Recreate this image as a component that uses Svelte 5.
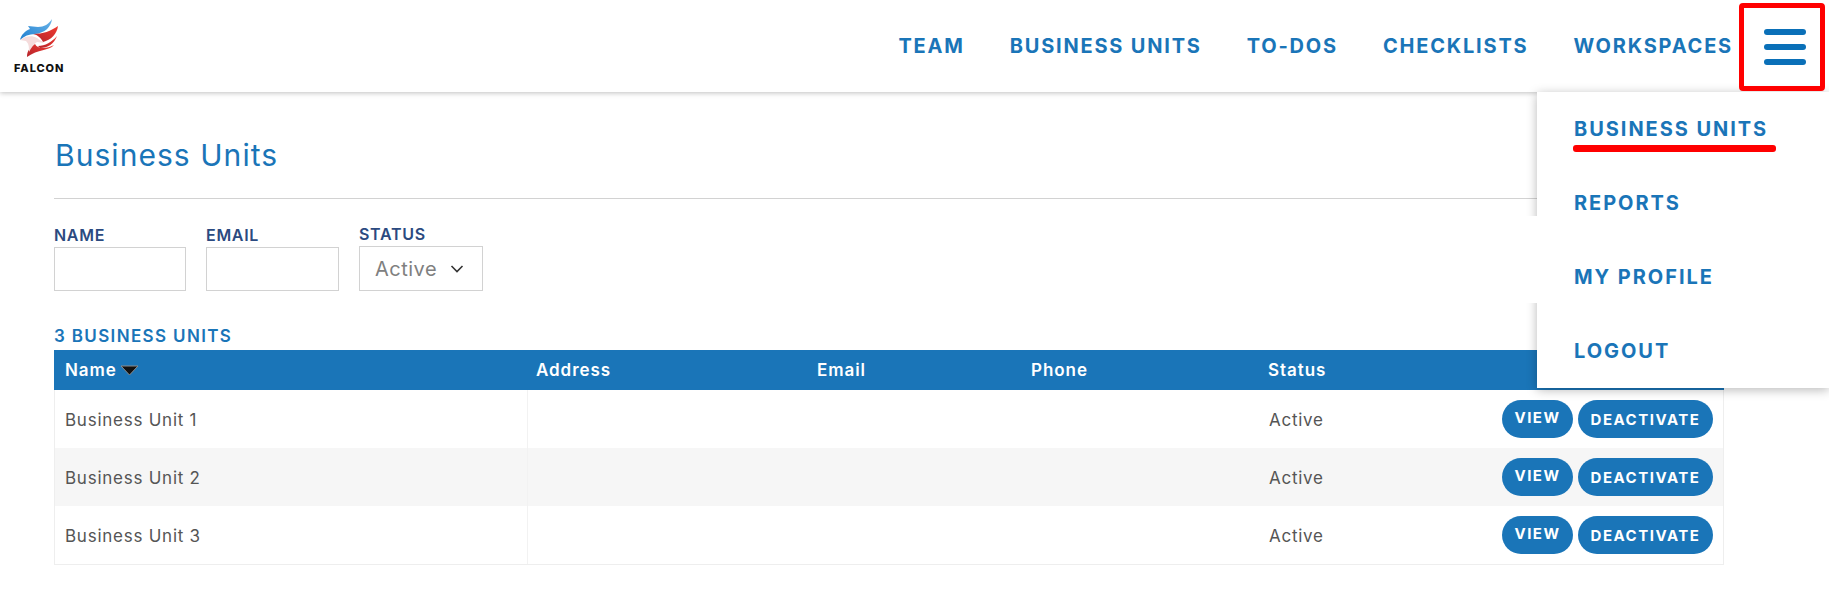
<script>
    let navItems = ['TEAM', 'BUSINESS UNITS', 'TO-DOS', 'CHECKLISTS', 'WORKSPACES'];
    let menuItems = ['BUSINESS UNITS', 'REPORTS', 'MY PROFILE', 'LOGOUT'];
    let units = ['Business Unit 1', 'Business Unit 2', 'Business Unit 3'];
</script>

<div class="page">
    <header class="topbar">
        <div class="logo">
            <svg width="66" height="40" viewBox="0 0 66 40">
                <defs>
                    <linearGradient id="blue" x1="0" y1="1" x2="1" y2="0">
                        <stop offset="0" stop-color="#1f7fd0" />
                        <stop offset="1" stop-color="#6ab4e8" />
                    </linearGradient>
                    <linearGradient id="red" x1="0" y1="1" x2="1" y2="0">
                        <stop offset="0" stop-color="#b5242b" />
                        <stop offset="1" stop-color="#f03a30" />
                    </linearGradient>
                </defs>
                <path fill="url(#blue)" d="M39 0 C38 8 32 14 22 15 C16 15 11 17 7 21 C8 16 12 12 17 10 L15 7 L25 8 C31 8 36 5 39 0 Z" />
                <path fill="url(#red)" d="M45 7 C44 15 38 21 30 23 C28 19 25 16 20 15 C30 15 38 12 45 7 Z" />
                <path fill="url(#red)" d="M44 17 C41 25 35 29 27 29 L25 27 C32 27 39 23 44 17 Z" />
                <path fill="url(#red)" d="M41 26 C36 32 25 30 14 38 C14 32 17 28 22 25 C24 30 34 30 41 26 Z" />
                <path fill="#f5dcdc" d="M7 21 C12 17 19 16 24 19 L31 24 L24 23 C21 25 18 29 16 33 C16 28 16 25 13 22 Z" />
            </svg>
            <span class="logo-name">FALCON</span>
        </div>
        <nav class="nav">
            {#each navItems as item}
                <a href="#top">{item}</a>
            {/each}
        </nav>
    </header>

    <main class="content">
        <h1>Business Units</h1>
        <hr />
        <div class="filters">
            <label class="field">
                <span>NAME</span>
                <input type="text" />
            </label>
            <label class="field">
                <span>EMAIL</span>
                <input type="text" />
            </label>
            <div class="field status">
                <span>STATUS</span>
                <div class="select">
                    Active
                    <svg width="14" height="8" viewBox="0 0 14 8"><path d="M1.5 1 L7 6.5 L12.5 1" fill="none" stroke="#333" stroke-width="1.6" /></svg>
                </div>
            </div>
        </div>

        <div class="count">3 BUSINESS UNITS</div>
        <div class="table">
            <div class="row head">
                <div class="cell name">Name<svg class="sort" width="19" height="11" viewBox="0 0 19 11"><path d="M1 1 H18 L9.5 10 Z" fill="#111" stroke="#8c8c8c" stroke-width="1" /></svg></div>
                <div class="cell">Address</div>
                <div class="cell">Email</div>
                <div class="cell">Phone</div>
                <div class="cell">Status</div>
                <div class="cell"></div>
            </div>
            {#each units as unit}
                <div class="row">
                    <div class="cell first">{unit}</div>
                    <div class="cell"></div>
                    <div class="cell"></div>
                    <div class="cell"></div>
                    <div class="cell">Active</div>
                    <div class="cell actions">
                        <button class="view">VIEW</button>
                        <button class="deactivate">DEACTIVATE</button>
                    </div>
                </div>
            {/each}
        </div>
    </main>

    <div class="menu">
        {#each menuItems as item, i}
            <a href="#top" class:current={i == 0}>{item}</a>
        {/each}
    </div>
    <div class="patch"></div>

    <div class="burger-mark">
        <i></i><i></i><i></i>
    </div>
    <div class="underline"></div>
</div>

<style>
    :global(body) {
        margin: 0;
        background: #fff;
        font-family: Inter, "Liberation Sans", sans-serif;
    }
    .page {
        position: relative;
        width: 1829px;
        height: 597px;
        overflow: hidden;
    }
    a {
        text-decoration: none;
        color: #1a75b8;
    }

    .topbar {
        height: 92px;
        display: flex;
        justify-content: space-between;
        align-items: center;
        background: #fff;
        box-shadow: 0 1px 5px rgba(0, 0, 0, 0.25);
        position: relative;
    }
    .logo {
        display: flex;
        flex-direction: column;
        align-items: flex-start;
        margin-left: 13px;
    }
    .logo svg {
        display: block;
    }
    .logo-name {
        font-size: 11px;
        font-weight: 800;
        letter-spacing: 0.9px;
        color: #111;
        line-height: 10px;
        margin: 4px 0 0 1px;
    }
    .nav {
        display: flex;
        gap: 45px;
        margin-right: 96px;
    }
    .nav a {
        font-size: 20px;
        font-weight: 700;
        letter-spacing: 1.8px;
        line-height: 24px;
    }

    .content {
        padding: 0 105px 0 54px;
    }
    h1 {
        margin: 46px 0 0 1px;
        font-size: 30px;
        line-height: 34px;
        font-weight: 400;
        letter-spacing: 1.05px;
        color: #1a75b8;
    }
    hr {
        border: 0;
        border-top: 1px solid #d2d2d2;
        margin: 26px 0 0;
    }
    .filters {
        display: flex;
        gap: 20px;
        margin-top: 26px;
        align-items: flex-end;
    }
    .field {
        display: flex;
        flex-direction: column;
    }
    .field span {
        font-size: 16px;
        line-height: 18px;
        font-weight: 600;
        color: #2b4a80;
        letter-spacing: 0.7px;
    }
    .field input {
        box-sizing: border-box;
        width: 132px;
        height: 44px;
        border: 1px solid #d2d2d2;
        background: #fff;
        margin: 3px 0 0;
        padding: 0;
    }
    .field:nth-child(2) input {
        width: 133px;
    }
    .status {
        width: 124px;
    }
    .select {
        box-sizing: border-box;
        height: 45px;
        margin-top: 3px;
        border: 1px solid #d2d2d2;
        display: flex;
        align-items: center;
        justify-content: space-between;
        padding: 0 18px 0 15px;
        font-size: 20px;
        letter-spacing: 0.5px;
        color: #808080;
    }

    .count {
        margin-top: 35px;
        font-size: 17px;
        line-height: 20px;
        font-weight: 600;
        color: #1a75b8;
        letter-spacing: 1.35px;
    }
    .table {
        margin-top: 4px;
        border: 1px solid #eee;
        border-top: 0;
    }
    .row {
        display: grid;
        grid-template-columns: 472px 281px 214px 237px 1fr auto;
        height: 58px;
        align-items: center;
        color: #555;
        font-size: 17px;
        letter-spacing: 0.75px;
    }
    .row:nth-child(3) {
        background: #f6f6f6;
    }
    .row.head {
        height: 40px;
        background: #1a75b8;
        color: #fff;
        font-weight: 600;
        margin: 0 -1px;
        letter-spacing: 0.95px;
    }
    .cell {
        box-sizing: border-box;
        padding-left: 10px;
        display: flex;
        align-items: center;
        height: 100%;
    }
    .cell.name {
        padding-left: 11px;
    }
    .cell.first {
        border-right: 1px solid #f2f2f2;
        margin-right: -1px;
    }
    .row:not(.head) .cell {
        padding-top: 1px;
    }
    .sort {
        margin-left: 3px;
    }
    .row:not(.head) .cell.actions {
        gap: 5px;
        padding-right: 10px;
        padding-top: 0;
    }
    button {
        height: 38px;
        border: 0;
        border-radius: 19px;
        background: #1a75b8;
        color: #fff;
        font-family: inherit;
        font-size: 15px;
        font-weight: 700;
        letter-spacing: 1.5px;
        padding: 0;
    }
    .view {
        width: 71px;
        padding-bottom: 3px;
    }
    .deactivate {
        width: 135px;
    }

    /* dropdown, lies over the page */
    .menu {
        position: absolute;
        left: 1537px;
        top: 92px;
        width: 292px;
        height: 296px;
        background: #fff;
        box-shadow: 0 2px 10px rgba(0, 0, 0, 0.28);
        display: flex;
        flex-direction: column;
    }
    .menu a {
        height: 74px;
        display: flex;
        align-items: center;
        padding-left: 37px;
        font-size: 20px;
        font-weight: 700;
        letter-spacing: 1.95px;
    }
    .patch {
        position: absolute;
        left: 1520px;
        top: 216px;
        width: 17px;
        height: 87px;
        background: #fff;
        border-radius: 4px 0 0 4px;
    }
    .underline {
        position: absolute;
        left: 1573px;
        top: 145px;
        width: 203px;
        height: 7px;
        border-radius: 3px;
        background: #ff0000;
    }
    .burger-mark {
        position: absolute;
        left: 1739px;
        top: 3px;
        box-sizing: border-box;
        width: 86px;
        height: 88px;
        border: 5px solid #ff0000;
        border-radius: 4px;
        padding: 21px 0 0 20px;
        display: flex;
        flex-direction: column;
        gap: 9px;
    }
    .burger-mark i {
        display: block;
        width: 42px;
        height: 6px;
        border-radius: 3px;
        background: #0a70b8;
    }
</style>
